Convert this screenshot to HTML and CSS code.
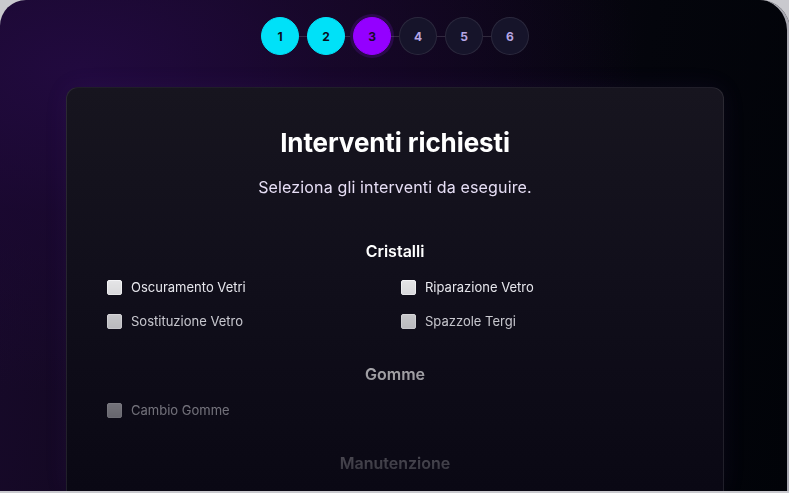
FILE: index.html
```html
<!DOCTYPE html>
<html lang="it">
<head>
<meta charset="utf-8">
<title>Interventi richiesti</title>
<link rel="stylesheet" href="styles.css">
</head>
<body>
<div class="frame">
  <ol class="stepper">
    <li class="step done">1</li>
    <li class="line"></li>
    <li class="step done">2</li>
    <li class="line"></li>
    <li class="step active">3</li>
    <li class="line"></li>
    <li class="step">4</li>
    <li class="line"></li>
    <li class="step">5</li>
    <li class="line"></li>
    <li class="step">6</li>
  </ol>

  <section class="card">
    <div class="card-inner">
      <h1 class="title">Interventi richiesti</h1>
      <p class="subtitle">Seleziona gli interventi da eseguire.</p>

      <div class="group">
        <h2 class="group-title">Cristalli</h2>
        <div class="options">
          <label class="option"><input type="checkbox" class="box"><span>Oscuramento Vetri</span></label>
          <label class="option"><input type="checkbox" class="box"><span>Riparazione Vetro</span></label>
          <label class="option"><input type="checkbox" class="box"><span>Sostituzione Vetro</span></label>
          <label class="option"><input type="checkbox" class="box"><span>Spazzole Tergi</span></label>
        </div>
      </div>

      <div class="group">
        <h2 class="group-title">Gomme</h2>
        <div class="options">
          <label class="option"><input type="checkbox" class="box"><span>Cambio Gomme</span></label>
        </div>
      </div>

      <div class="group">
        <h2 class="group-title">Manutenzione</h2>
      </div>
    </div>
  </section>
</div>
</body>
</html>
```

FILE: styles.css
```css
html, body {
  margin: 0;
  padding: 0;
}
body {
  background: #c9c9ce;
  width: 789px;
  height: 493px;
  overflow: hidden;
  font-family: Inter, "Noto Sans", "Liberation Sans", sans-serif;
}
.frame {
  width: 790px;
  height: 491px;
  box-sizing: border-box;
  border-radius: 26px 30px 0 0;
  overflow: hidden;
  background:
    radial-gradient(ellipse 560px 320px at 80px 70px, rgba(34, 10, 64, 0.95) 0%, rgba(28, 8, 52, 0.6) 45%, rgba(20, 6, 40, 0) 100%),
    linear-gradient(100deg, #180a2c 0%, #0f0619 40%, #04050c 75%, #010308 100%);
  box-shadow: inset -4px 0 0 -1px #a9a9b1;
  padding-top: 17px;
  display: flex;
  flex-direction: column;
  align-items: center;
}

.stepper {
  list-style: none;
  margin: 0;
  padding: 0;
  display: flex;
  align-items: center;
}
.step {
  width: 38px;
  height: 38px;
  border-radius: 50%;
  box-sizing: border-box;
  display: flex;
  align-items: center;
  justify-content: center;
  font-size: 12px;
  font-weight: 700;
  color: #b7a6e4;
  background: #16142a;
  border: 1px solid rgba(255, 255, 255, 0.09);
}
.step.done {
  background: #00e1f8;
  border-color: #00e1f8;
  color: #0a0c1a;
}
.step.active {
  background: #9400ff;
  border-color: #9400ff;
  color: #170a2a;
  box-shadow: 0 0 0 3px #2a0a4a;
}
.line {
  width: 8px;
  height: 1px;
  background: rgba(255, 255, 255, 0.14);
}

.card {
  margin-top: 32px;
  width: 658px;
  flex: 1;
  box-sizing: border-box;
  border: 1px solid rgba(255, 255, 255, 0.09);
  border-bottom: none;
  border-radius: 12px 12px 0 0;
  background: linear-gradient(180deg, #17151f 0%, #110f1b 45%, #0a0814 100%);
  box-shadow: 0 0 24px rgba(120, 60, 200, 0.08);
  padding: 39px 40px 0;
}
.card-inner {
  -webkit-mask-image: linear-gradient(180deg, #000 0px, #000 155px, rgba(0,0,0,0.02) 385px);
  mask-image: linear-gradient(180deg, #000 0px, #000 155px, rgba(0,0,0,0.02) 385px);
}
.title {
  margin: 0;
  text-align: center;
  font-size: 26px;
  line-height: 32px;
  font-weight: 700;
  color: #ffffff;
  letter-spacing: -0.1px;
}
.subtitle {
  margin: 16px 0 0;
  text-align: center;
  font-size: 16px;
  line-height: 24px;
  color: #e6def5;
  letter-spacing: 0.15px;
}
.group {
  margin-top: 40px;
}
.group + .group {
  margin-top: 31px;
}
.group-title {
  margin: 0 0 14px;
  text-align: center;
  font-size: 16px;
  line-height: 24px;
  font-weight: 600;
  color: #ffffff;
}
.options {
  display: grid;
  grid-template-columns: 1fr 1fr;
  column-gap: 12px;
  row-gap: 14px;
}
.option {
  display: flex;
  align-items: center;
  gap: 9px;
  height: 20px;
  font-size: 13px;
  color: #ececf2;
}
.box {
  -webkit-appearance: none;
  appearance: none;
  margin: 0;
  width: 15px;
  height: 15px;
  border-radius: 2px;
  background: #e4e4e6;
  border: 1px solid #f4f4f6;
  box-sizing: border-box;
}
```
